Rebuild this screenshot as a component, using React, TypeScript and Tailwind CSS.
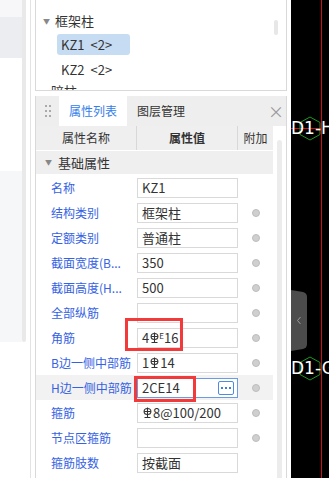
import React from 'react';

const Rebar = () => (
  <svg width="9" height="12" viewBox="0 0 9 12" className="inline-block align-[-1px] mx-[1px]" fill="none" stroke="currentColor" strokeWidth="1.1">
    <ellipse cx="4.5" cy="4.5" rx="3.4" ry="3" />
    <path d="M4.5 0.5v10M1.2 4.5h6.6M1.5 10.5h6" />
  </svg>
);

type Row = { label: string; value: React.ReactNode; dot: boolean; active?: boolean };

const rows: Row[] = [
  { label: '名称', value: 'KZ1', dot: false },
  { label: '结构类别', value: '框架柱', dot: true },
  { label: '定额类别', value: '普通柱', dot: true },
  { label: '截面宽度(B...', value: '350', dot: true },
  { label: '截面高度(H...', value: '500', dot: true },
  { label: '全部纵筋', value: '', dot: true },
  {
    label: '角筋',
    value: (
      <>
        4<Rebar />
        <sup className="text-[8px] -ml-[1px]">E</sup>16
      </>
    ),
    dot: true,
  },
  { label: 'B边一侧中部筋', value: (<>1<Rebar />14</>), dot: true },
  { label: 'H边一侧中部筋', value: '2CE14', dot: true, active: true },
  { label: '箍筋', value: (<><Rebar />8@100/200</>), dot: true },
  { label: '节点区箍筋', value: '', dot: true },
  { label: '箍筋肢数', value: '按截面', dot: false },
];

const Hex = ({ top }: { top: number }) => (
  <svg
    width="22"
    height="25"
    viewBox="0 0 22 25"
    className="absolute left-[8px]"
    style={{ top }}
    fill="none"
    stroke="#1e9a1e"
    strokeWidth="1"
  >
    <path d="M11 1 L21 6.5 L21 18.5 L11 24 L1 18.5 L1 6.5 Z" />
  </svg>
);

const App = () => {
  return (
    <div
      className="w-[329px] h-[478px] flex bg-white overflow-hidden text-[#333]"
      style={{ fontFamily: '"Noto Sans CJK SC", "Microsoft YaHei", "Liberation Sans", sans-serif' }}
    >
      {/* far left list */}
      <div className="w-[22px] shrink-0 flex flex-col">
        <div className="h-[17px] bg-[#f7f7f9]" />
        <div className="h-[41px] bg-[#ecedf1]" />
        <div className="h-[113px] bg-white" />
        <div className="h-[171px] bg-[#f6f7f9]" />
        <div className="flex-1 bg-white" />
      </div>
      <div className="w-[4px] shrink-0 h-[342px] bg-[#e9e9e9] rounded-b-full" />
      <div className="w-[4px] shrink-0" />
      <div className="w-[1px] shrink-0 bg-[#e3e3e3]" />
      <div className="w-[4px] shrink-0" />

      {/* main panels */}
      <div className="w-[252px] shrink-0 flex flex-col">
        {/* tree */}
        <div className="h-[91px] shrink-0 border-x border-b border-[#d9d9d9] relative text-[13px] overflow-hidden">
          <div className="flex items-center h-[22px] mt-[10px] pl-[7px]">
            <span className="text-[7px] text-[#888] mr-[5px]">▼</span>
            <span>框架柱</span>
          </div>
          <div className="mt-[2px] ml-[21px] w-[73px] h-[21px] bg-[#c6dcf2] rounded-[3px] flex items-center pl-[4px] gap-[6px]">
            <span>KZ1</span>
            <span>&lt;2&gt;</span>
          </div>
          <div className="mt-[4px] ml-[25px] h-[21px] flex items-center gap-[6px]">
            <span>KZ2</span>
            <span>&lt;2&gt;</span>
          </div>
          <div className="mt-[0px] ml-[15px] h-[21px] flex items-center">暗柱</div>
          <div className="absolute left-[238px] top-[20px] w-[4px] h-[15px] rounded-full bg-[#e7e7e7]" />
        </div>

        <div className="h-[5px] shrink-0" />

        {/* property panel */}
        <div className="flex-1 min-h-0 border-x border-[#d9d9d9] relative overflow-hidden">
          <div className="h-[30px] bg-[#eeeeee] flex items-center text-[12px]">
            <div className="w-[23px] flex justify-center">
              <div className="grid grid-cols-2 gap-x-[2px] gap-y-[3px]">
                {[0, 1, 2, 3, 4, 5].map((i) => (
                  <div key={i} className="w-[2px] h-[2px] bg-[#aaa]" />
                ))}
              </div>
            </div>
            <div className="w-[68px] h-full bg-white text-[#3580ea] flex items-center justify-center">属性列表</div>
            <div className="w-[68px] h-full flex items-center justify-center">图层管理</div>
            <div className="flex-1" />
            <div className="w-[14px] mr-[4px] text-[#9a9a9a] text-[16px] leading-none">×</div>
          </div>

          <div className="flex">
            <div className="w-[237px] text-[12px]">
              <div className="h-[25px] bg-[#efefef] flex border-b border-white">
                <div className="w-[101px] flex items-center justify-center border-r border-[#d8d8d8]">属性名称</div>
                <div className="w-[101px] flex items-center justify-center border-r border-[#d8d8d8] font-bold">属性值</div>
                <div className="flex-1 flex items-center justify-center">附加</div>
              </div>
              <div className="h-[24px] bg-[#efefef] flex items-center border-b border-white">
                <span className="text-[7px] text-[#888] ml-[9px] mr-[6px]">▼</span>
                <span className="text-[13px]">基础属性</span>
              </div>
              {rows.map((r) => (
                <div
                  key={r.label}
                  className={`h-[25px] flex items-center ${r.active ? 'bg-[#f2f2f2]' : 'bg-white'}`}
                >
                  <div className="w-[101px] pl-[15px] text-[#3462e3] text-[12px] whitespace-nowrap overflow-hidden">{r.label}</div>
                  <div
                    className={`w-[101px] h-[20px] flex items-center pl-[4px] text-[13px] bg-white border ${
                      r.active ? 'border-[#6b9be0]' : 'border-[#d9d9d9]'
                    }`}
                  >
                    <span className="flex-1 whitespace-nowrap">{r.value}</span>
                    {r.active && (
                      <div className="w-[16px] h-[14px] mr-[3px] border border-[#4d8ae0] rounded-[2px] flex items-center justify-center gap-[2px]">
                        <div className="w-[2px] h-[2px] bg-[#3b7ee0]" />
                        <div className="w-[2px] h-[2px] bg-[#3b7ee0]" />
                        <div className="w-[2px] h-[2px] bg-[#3b7ee0]" />
                      </div>
                    )}
                  </div>
                  <div className="flex-1 flex justify-center">
                    {r.dot && <div className="w-[8px] h-[8px] rounded-full bg-[#cfcfcf] border border-[#bdbdbd]" />}
                  </div>
                </div>
              ))}
            </div>
            <div className="flex-1 flex justify-center pt-[14px]">
              <div className="w-[5px] h-[360px] bg-[#ececec] rounded-full" />
            </div>
          </div>

          {/* red highlight boxes */}
          <div className="absolute left-[89px] top-[222px] w-[58px] h-[33px] border-[3px] border-[#f23a3a]" />
          <div className="absolute left-[98px] top-[280px] w-[62px] h-[26px] border-[3px] border-[#f23a3a]" />
        </div>
      </div>

      <div className="w-[4px] shrink-0" />

      {/* canvas */}
      <div className="flex-1 bg-black relative overflow-hidden" style={{ fontFamily: '"DejaVu Sans", sans-serif' }}>
        <div className="absolute left-[30px] top-0 bottom-0 w-[1px] bg-[#d01010]" />
        <div className="absolute left-0 top-[128px] w-[31px] h-[1px] bg-[#d01010]" />
        <Hex top={116} />
        <div className="absolute left-0 top-[118px] text-white text-[17px] leading-[20px] whitespace-nowrap">D1-H</div>
        <Hex top={356} />
        <div className="absolute left-0 top-[358px] text-white text-[17px] leading-[20px] whitespace-nowrap">D1-G</div>
        <svg className="absolute left-0 top-[290px]" width="17" height="61" viewBox="0 0 17 61">
          <path d="M0 0 L12 2 Q16 3 16 7 L16 54 Q16 58 12 59 L0 61 Z" fill="#4c4c4c" />
          <path d="M9.5 27 L6.5 30.5 L9.5 34" stroke="#9a9a9a" strokeWidth="1" fill="none" />
        </svg>
      </div>
    </div>
  );
};

export default App;
